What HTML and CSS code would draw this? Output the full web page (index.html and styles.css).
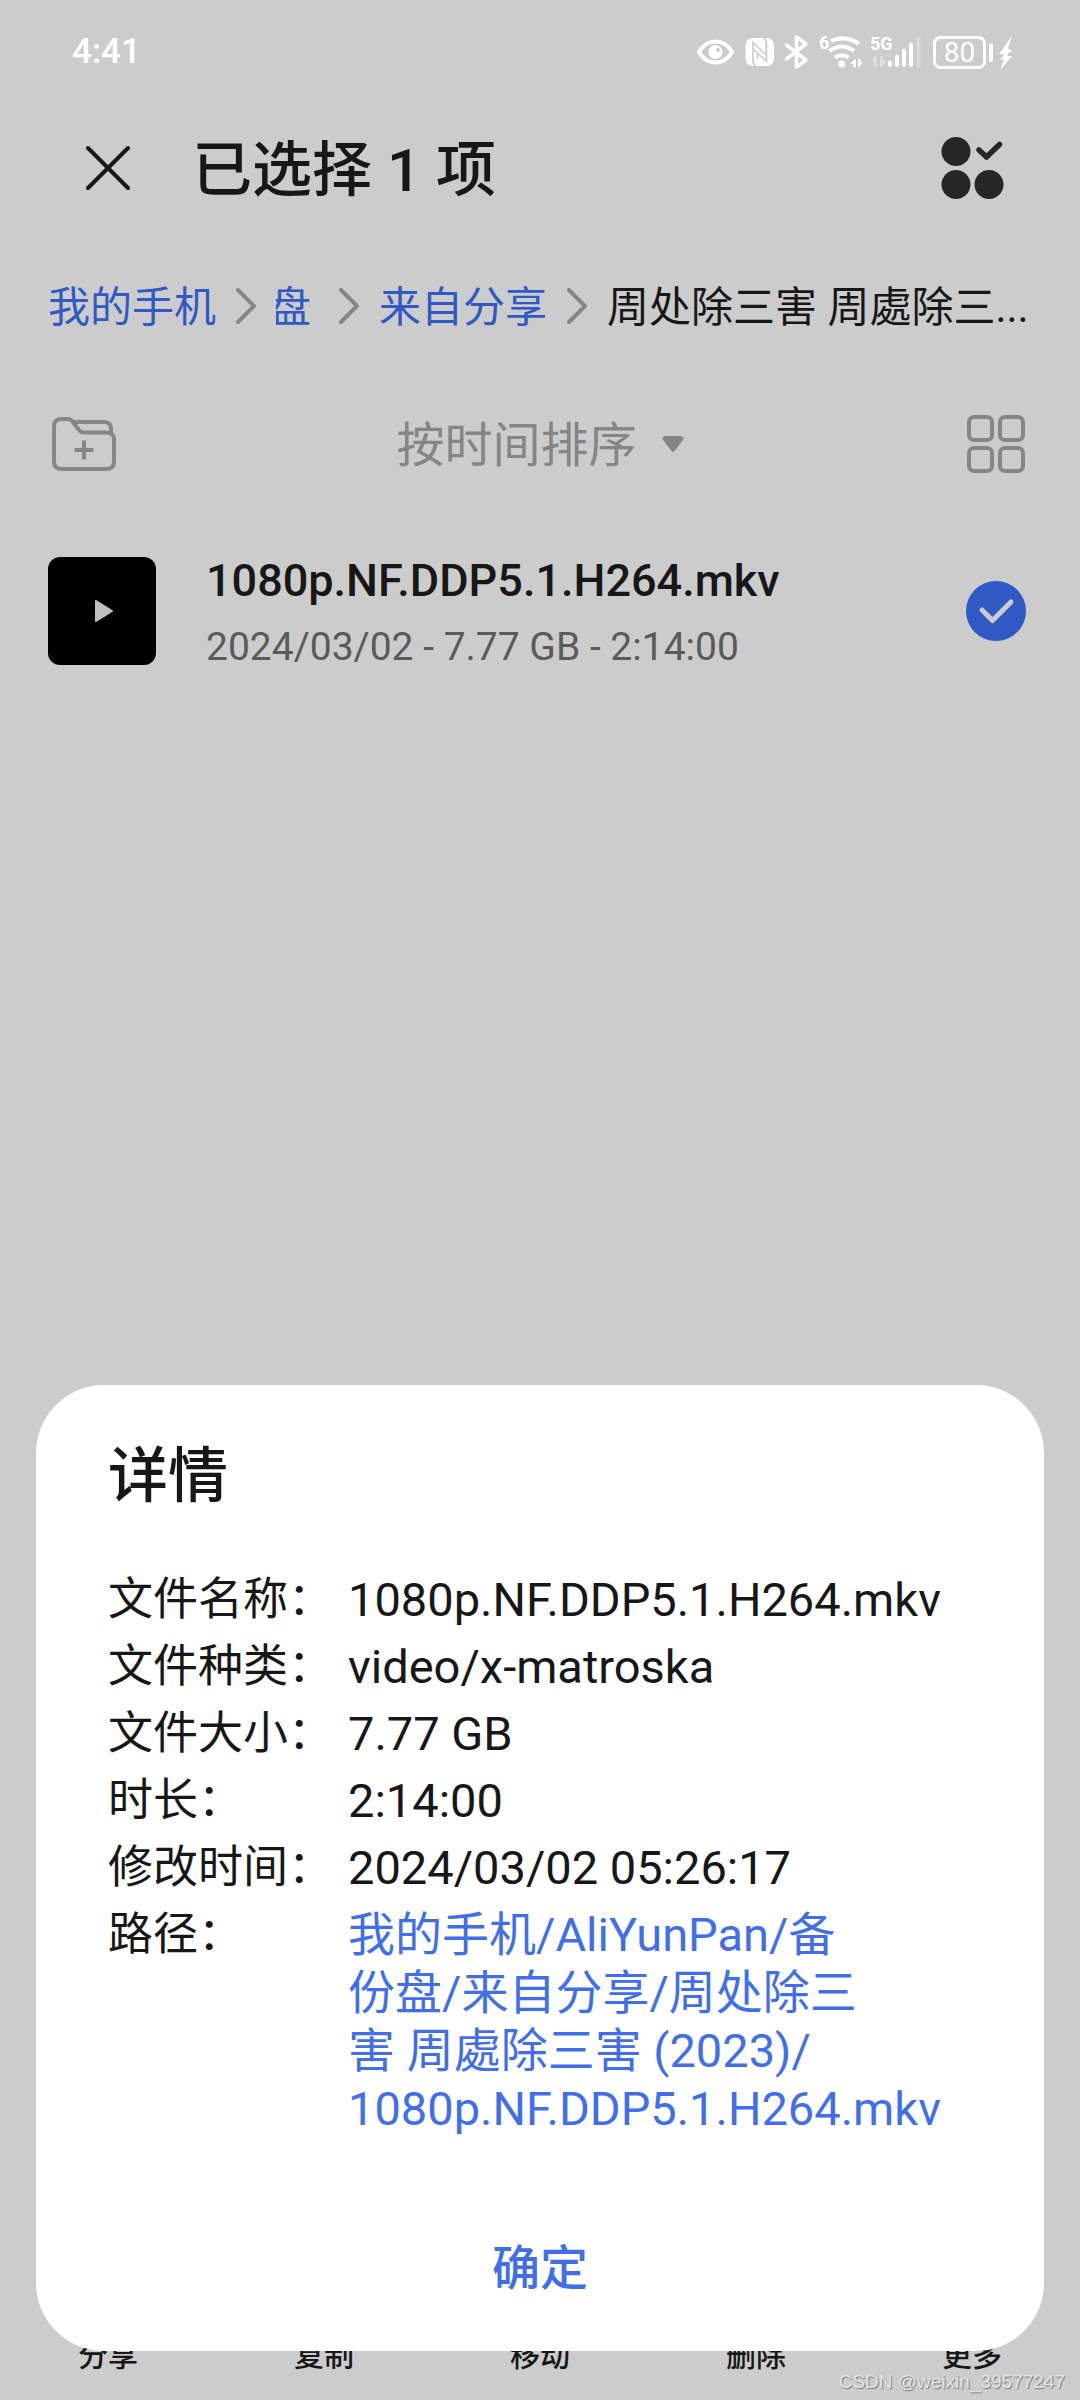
FILE: index.html
```html
<!DOCTYPE html>
<html lang="zh-CN">
<head>
<meta charset="utf-8">
<meta name="viewport" content="width=device-width, initial-scale=1">
<title>文件管理</title>
<link rel="stylesheet" href="styles.css">
</head>
<body>
<div class="screen">
  <div class="status">
    <time class="clock">4:41</time>
    <div class="indicators">
      <svg width="316" height="40" viewBox="0 0 316 40" fill="none" aria-hidden="true">
        <!-- eye comfort -->
        <path d="M2 20Q8 9.500 18.500 9.500T35 20Q29 30.500 18.500 30.500T2 20Z" stroke="#fff" stroke-width="4"/>
        <circle cx="18.500" cy="20" r="7" fill="#fff"/><circle cx="21" cy="18" r="2" fill="#ccc"/>
        <!-- NFC -->
        <rect x="48.500" y="6" width="28.500" height="28" rx="7" fill="#fff"/>
        <path d="M59 34Q56 32.500 56 29V10.500L69 23V12M66.500 6Q69.500 7.500 69.500 11V29L56 17M60.500 27V21" stroke="#ccc" stroke-width="1.600"/>
        <!-- bluetooth -->
        <path d="M89.500 13L109 28L99.500 35V5L109 12L89.500 27" stroke="#fff" stroke-width="3.500" stroke-linejoin="round" stroke-linecap="round"/>
        <!-- wifi -->
        <text class="tag" x="122" y="17">6</text>
        <path d="M134 9Q149 2.500 162 12M132.500 19Q145 10 157 19M138 25.500Q144.500 21 151.500 25.500" stroke="#fff" stroke-width="4"/>
        <circle cx="144.700" cy="32" r="3.500" fill="#fff"/>
        <path d="M153 32L158 27H159V35H156.500V32ZM161 27H163.500V30H166L162 35H161Z" fill="#fff"/>
        <!-- mobile signal -->
        <text class="tag" x="173" y="18">5G</text>
        <path d="M174 30L178 24H180V35H177V30ZM183 24H186V29H190L185 35H183Z" fill="#dedede"/>
        <path d="M193 30.500V33M200 24.500V33M207 18.500V33M214 12.500V33" stroke="#fff" stroke-width="4" stroke-linecap="round"/>
        <path d="M221.500 5V35" stroke="#dadada" stroke-width="4"/>
        <!-- battery -->
        <rect x="237.500" y="5.500" width="50" height="30" rx="6" stroke="#fff" stroke-width="3"/>
        <path d="M294 13.500V28" stroke="#fff" stroke-width="4" stroke-linecap="round"/>
        <text class="level" x="262.500" y="30" text-anchor="middle">80</text>
        <path d="M315 4L302 22H307L305 26H302L307 28L303 38L315 24H310L312 20H315L311 16Z" fill="#fff"/>
      </svg>
    </div>
  </div>

  <header class="header">
    <button class="icon-button" aria-label="关闭">
      <svg width="48" height="48" viewBox="0 0 48 48" fill="none" stroke="#171717" stroke-width="4" stroke-linecap="round"><path d="M4 4L44 44M44 4L4 44"/></svg>
    </button>
    <h1 class="title">已选择 1 项</h1>
    <button class="icon-button" aria-label="全选">
      <svg width="64" height="64" viewBox="0 0 64 64" fill="#262626"><circle cx="16" cy="15.500" r="14.500"/><circle cx="16" cy="48.500" r="14.500"/><circle cx="49" cy="48.500" r="14.500"/><path d="M39 14L46.500 21L59.500 8.500" fill="none" stroke="#262626" stroke-width="5.500" stroke-linecap="round" stroke-linejoin="round"/></svg>
    </button>
  </header>

  <nav class="crumbs" aria-label="路径">
    <a class="crumb" href="#">我的手机</a>
    <svg class="chevron" viewBox="0 0 20 36"><path d="M2 2L18 18L2 34"/></svg>
    <a class="crumb crumb-clipped" href="#">盘</a>
    <svg class="chevron" viewBox="0 0 20 36"><path d="M2 2L18 18L2 34"/></svg>
    <a class="crumb" href="#">来自分享</a>
    <svg class="chevron" viewBox="0 0 20 36"><path d="M2 2L18 18L2 34"/></svg>
    <span class="crumb-current">周处除三害 周處除三...</span>
  </nav>

  <div class="tools">
    <button class="icon-button" aria-label="新建文件夹">
      <svg width="72" height="60" viewBox="0 0 72 60" fill="none" stroke="#868686" stroke-width="4"><path d="M20 5H14Q6 5 6 12V48Q6 55 14 55H58Q66 55 66 48V25Q66 18.500 58 18.500H36Q33 18.500 31 16L25 8Q23 5 20 5M25 8H56Q63 8 63 15V21"/><path d="M36 26.500V45.500M26.500 36H45.500"/></svg>
    </button>
    <label class="sort">
      <select class="sort-select" aria-label="排序方式"><option>按时间排序</option></select>
      <svg width="22" height="16" viewBox="0 0 22 16" fill="#858585"><path d="M3 0H19Q23 1 21 4L13 14.500Q11 17 9 14.500L1 4Q-1 1 3 0Z"/></svg>
    </label>
    <button class="icon-button" aria-label="网格视图">
      <svg width="60" height="60" viewBox="0 0 60 60" fill="none" stroke="#868686" stroke-width="4"><rect x="3" y="3" width="23" height="23" rx="5"/><rect x="34" y="3" width="23" height="23" rx="5"/><rect x="3" y="34" width="23" height="23" rx="5"/><rect x="34" y="34" width="23" height="23" rx="5"/></svg>
    </button>
  </div>

  <main class="files">
    <label class="file">
      <span class="thumb"><svg width="24" height="24" viewBox="0 0 24 24"><path d="M6 2L22 12L6 22Z" fill="#c0c0c0" stroke="#c0c0c0" stroke-width="2" stroke-linejoin="round"/></svg></span>
      <span class="file-text">
        <span class="file-name">1080p.NF.DDP5.1.H264.mkv</span>
        <span class="file-meta">2024/03/02 - 7.77 GB - 2:14:00</span>
      </span>
      <span class="check">
        <input class="check-input" type="checkbox" checked>
        <svg class="check-mark" width="60" height="60" viewBox="0 0 60 60"><path d="M16 29L26.500 39.500L45 21"/></svg>
      </span>
    </label>
  </main>

  <footer class="actions">
    <button class="action">分享</button>
    <button class="action">复制</button>
    <button class="action">移动</button>
    <button class="action">删除</button>
    <button class="action">更多</button>
  </footer>

  <section class="sheet" role="dialog" aria-labelledby="sheet-title">
    <h2 class="sheet-title" id="sheet-title">详情</h2>
    <dl class="details">
      <dt>文件名称：</dt><dd>1080p.NF.DDP5.1.H264.mkv</dd>
      <dt>文件种类：</dt><dd>video/x-matroska</dd>
      <dt>文件大小：</dt><dd>7.77 GB</dd>
      <dt>时长：</dt><dd>2:14:00</dd>
      <dt>修改时间：</dt><dd>2024/03/02 05:26:17</dd>
      <dt>路径：</dt><dd><a class="path" href="#">我的手机/AliYunPan/备<br>份盘/来自分享/周处除三<br>害 周處除三害 (2023)/<br>1080p.NF.DDP5.1.H264.mkv</a></dd>
    </dl>
    <button class="confirm">确定</button>
  </section>
  <div class="watermark">CSDN @weixin_39577247</div>
</div>
</body>
</html>
```
FILE: styles.css
```css
* { box-sizing: border-box; }
body {
  margin: 0;
  background: #ccc;
  color: #171717;
  font-family: Roboto, "Noto Sans CJK SC", sans-serif;
}
button {
  padding: 0;
  border: 0;
  background: none;
  font: inherit;
  color: inherit;
}
a { text-decoration: none; }
svg { display: block; flex: none; }

.screen {
  position: relative;
  display: flex;
  flex-direction: column;
  min-height: 100vh;
  overflow: hidden;
}

.status {
  display: flex;
  align-items: center;
  justify-content: space-between;
  height: 104px;
  padding: 0 67px 0 72px;
  color: #fff;
}
.clock { font-size: 35px; font-weight: 500; line-height: 40px; }
.tag { font: 700 18px "Liberation Sans Narrow", Roboto, sans-serif; fill: #fff; }
.level { font: 400 28px Roboto, sans-serif; fill: #fff; }

.header {
  display: flex;
  align-items: center;
  gap: 60px;
  height: 128px;
  padding: 0 76px 0 84px;
}
.title { flex: 1; margin: 0; padding-top: 6px; font-size: 60px; font-weight: 500; line-height: 80px; }

.crumbs {
  display: flex;
  align-items: center;
  gap: 20px;
  height: 148px;
  padding: 0 46px 0 48px;
  font-size: 42px;
  line-height: 60px;
  white-space: nowrap;
}
.crumb, .crumb-current { padding-top: 4px; }
.crumb { color: #3059c4; }
.crumb-clipped {
  display: flex;
  justify-content: flex-end;
  width: 43px;
  padding-right: 8px;
  overflow: hidden;
}
.crumb-current { flex: 1; min-width: 0; overflow: hidden; text-overflow: ellipsis; }
.chevron { width: 20px; height: 36px; fill: none; stroke: #868686; stroke-width: 4; stroke-linecap: round; }

.tools {
  display: flex;
  align-items: center;
  justify-content: space-between;
  height: 128px;
  padding: 0 54px 0 48px;
}
.sort { display: flex; align-items: center; gap: 24px; padding-right: 6px; }
.sort-select {
  appearance: none;
  padding: 4px 0 0;
  border: 0;
  background: none;
  color: #858585;
  font: inherit;
  font-size: 48px;
  line-height: 64px;
}

.files { flex: 1; }
.file {
  display: flex;
  align-items: center;
  gap: 50px;
  padding: 37px 54px 37px 48px;
}
.thumb {
  display: grid;
  place-items: center;
  width: 108px;
  height: 108px;
  border-radius: 12px;
  background: #000;
}
.file-text { flex: 1; display: flex; flex-direction: column; gap: 6px; padding-top: 6px; }
.file-name { font-size: 45px; font-weight: 500; line-height: 60px; }
.file-meta { color: #5a5a5a; font-size: 39px; line-height: 60px; }
.check { display: grid; }
.check-input, .check-mark { grid-area: 1 / 1; }
.check-input {
  appearance: none;
  width: 60px;
  height: 60px;
  margin: 0;
  border-radius: 50%;
  background: #3059c4;
}
.check-mark { fill: none; stroke: #ccc; stroke-width: 5; stroke-linecap: round; stroke-linejoin: round; }

.actions { display: grid; grid-template-columns: repeat(5, 1fr); padding-bottom: 24px; }
.action { font-size: 30px; font-weight: 500; line-height: 40px; }

.sheet {
  position: absolute;
  right: 36px;
  bottom: 49px;
  left: 36px;
  display: flex;
  flex-direction: column;
  padding: 52px 72px 42px;
  border-radius: 68px;
  background: #fff;
}
.sheet-title { margin: 0 0 54px; font-size: 60px; font-weight: 500; line-height: 80px; }
.details {
  display: grid;
  grid-template-columns: 240px 1fr;
  row-gap: 9px;
  margin: 0;
  font-size: 47px;
  line-height: 58px;
}
.details dt { font-size: 45px; white-space: nowrap; }
.details dd { margin: 0; }
.path { color: #426fe8; }
.confirm { align-self: center; margin-top: 91px; color: #426fe8; font-size: 48px; font-weight: 500; line-height: 80px; }

.watermark {
  position: absolute;
  right: 15px;
  bottom: 6px;
  color: #e4e4e4;
  font-family: "Liberation Sans", Arial, sans-serif;
  font-size: 19px;
  line-height: 24px;
  text-shadow: 1px 1px 1px #777;
}
```
